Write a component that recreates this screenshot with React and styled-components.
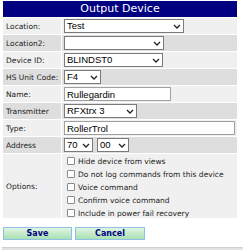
import React from 'react';
import styled, { createGlobalStyle } from 'styled-components';

const GlobalStyle = createGlobalStyle`
    html, body {
        margin: 0;
        padding: 0;
        background: #ffffff;
    }
    body {
        font-family: "DejaVu Sans", Verdana, sans-serif;
    }
`;

const Page = styled.div`
    padding: 1px 0 0 3px;
    width: 246px;
    box-sizing: border-box;
`;

const Panel = styled.div`
    width: 234px;
    display: flex;
    flex-direction: column;
    gap: 1px;
`;

const Header = styled.div`
    height: 16px;
    background-color: #000080;
    color: #ffffff;
    font-size: 11px;
    line-height: 16px;
    text-align: center;
`;

const Row = styled.div`
    display: flex;
    gap: 1px;
    height: ${props => props.$h || 16}px;
`;

const Label = styled.div`
    width: 58px;
    flex: none;
    box-sizing: border-box;
    padding-left: 3px;
    display: flex;
    align-items: center;
    font-size: 7.5px;
    color: #222;
    background-color: ${props => props.$alt ? '#dedede' : '#f0f0f0'};
`;

const Value = styled.div`
    flex: 1;
    box-sizing: border-box;
    padding-left: 2px;
    display: flex;
    align-items: center;
    gap: 4px;
    background-color: ${props => props.$alt ? '#dedede' : '#f0f0f0'};
`;

const SelectWrap = styled.span`
    position: relative;
    display: inline-flex;
    width: ${props => props.$w}px;
    height: 14px;
`;

const NativeSelect = styled.select`
    appearance: none;
    -webkit-appearance: none;
    width: 100%;
    height: 14px;
    margin: 0;
    padding: 0 0 0 2px;
    border: 1px solid #7a7a7a;
    border-radius: 0;
    background: #ffffff;
    color: #000;
    font-family: "Liberation Sans", Arial, sans-serif;
    font-size: 9.5px;
    line-height: 12px;
`;

const Chevron = styled.svg`
    position: absolute;
    right: 3px;
    top: 5px;
    pointer-events: none;
`;

const TextInput = styled.input`
    width: ${props => props.$w}px;
    height: 14px;
    box-sizing: border-box;
    margin: 0;
    padding: 0 0 0 2px;
    border: 1px solid #a0a0a0;
    background: #ffffff;
    color: #000;
    font-family: "Liberation Sans", Arial, sans-serif;
    font-size: 9.5px;
`;

const OptionList = styled.div`
    display: flex;
    flex-direction: column;
    gap: 5px;
    padding: 2px 0 0 3px;
`;

const CheckRow = styled.label`
    display: flex;
    align-items: center;
    gap: 3px;
    height: 8px;
    font-size: 7.5px;
    color: #222;
`;

const Check = styled.input`
    appearance: none;
    -webkit-appearance: none;
    margin: 0;
    width: 8px;
    height: 8px;
    box-sizing: border-box;
    border: 1px solid #8a8a8a;
    border-radius: 1px;
    background: #fff;
`;

const Buttons = styled.div`
    display: flex;
    gap: 3px;
    margin-top: 9px;
`;

const Button = styled.button`
    width: ${props => props.$w}px;
    height: 13px;
    margin: 0;
    padding: 0;
    box-sizing: border-box;
    border: 1px solid #8fc0e8;
    background: linear-gradient(#e0f5e2, #a9e0b3);
    color: #000080;
    font-family: "DejaVu Sans", Verdana, sans-serif;
    font-weight: bold;
    font-size: 8px;
    line-height: 11px;
`;

const Footer = styled.div`
    margin: 7px 0 0 -1px;
    width: 241px;
    height: 3px;
    background: #e2e2e2;
    border-top: 1px solid #d0d0d0;
`;

const Select = ({ w, value }) => (
    <SelectWrap $w={w}>
        <NativeSelect defaultValue={value}>
            <option value={value}>{value}</option>
        </NativeSelect>
        <Chevron width="8" height="5" viewBox="0 0 8 5">
            <path d="M1 1 L4 4 L7 1" fill="none" stroke="#222" strokeWidth="1.3" />
        </Chevron>
    </SelectWrap>
);

const options = [
    'Hide device from views',
    'Do not log commands from this device',
    'Voice command',
    'Confirm voice command',
    'Include in power fail recovery',
];

export default function App() {
    return (
        <Page>
            <GlobalStyle />
            <Panel>
                <Header>Output Device</Header>
                <Row>
                    <Label>Location:</Label>
                    <Value><Select w={120} value="Test" /></Value>
                </Row>
                <Row>
                    <Label $alt>Location2:</Label>
                    <Value $alt><Select w={100} value="" /></Value>
                </Row>
                <Row>
                    <Label>Device ID:</Label>
                    <Value><Select w={99} value="BLINDST0" /></Value>
                </Row>
                <Row>
                    <Label $alt>HS Unit Code:</Label>
                    <Value $alt><Select w={37} value="F4" /></Value>
                </Row>
                <Row>
                    <Label>Name:</Label>
                    <Value><TextInput $w={107} defaultValue="Rullegardin" /></Value>
                </Row>
                <Row>
                    <Label $alt>Transmitter</Label>
                    <Value $alt><Select w={73} value="RFXtrx 3" /></Value>
                </Row>
                <Row>
                    <Label>Type:</Label>
                    <Value><TextInput $w={171} defaultValue="RollerTrol" /></Value>
                </Row>
                <Row>
                    <Label $alt>Address</Label>
                    <Value $alt>
                        <Select w={29} value="70" />
                        <Select w={32} value="00" />
                    </Value>
                </Row>
                <Row $h={64}>
                    <Label>Options:</Label>
                    <Value>
                        <OptionList>
                            {options.map(o => (
                                <CheckRow key={o}><Check type="checkbox" />{o}</CheckRow>
                            ))}
                        </OptionList>
                    </Value>
                </Row>
            </Panel>
            <Buttons>
                <Button $w={69}>Save</Button>
                <Button $w={70}>Cancel</Button>
            </Buttons>
            <Footer />
        </Page>
    );
}
